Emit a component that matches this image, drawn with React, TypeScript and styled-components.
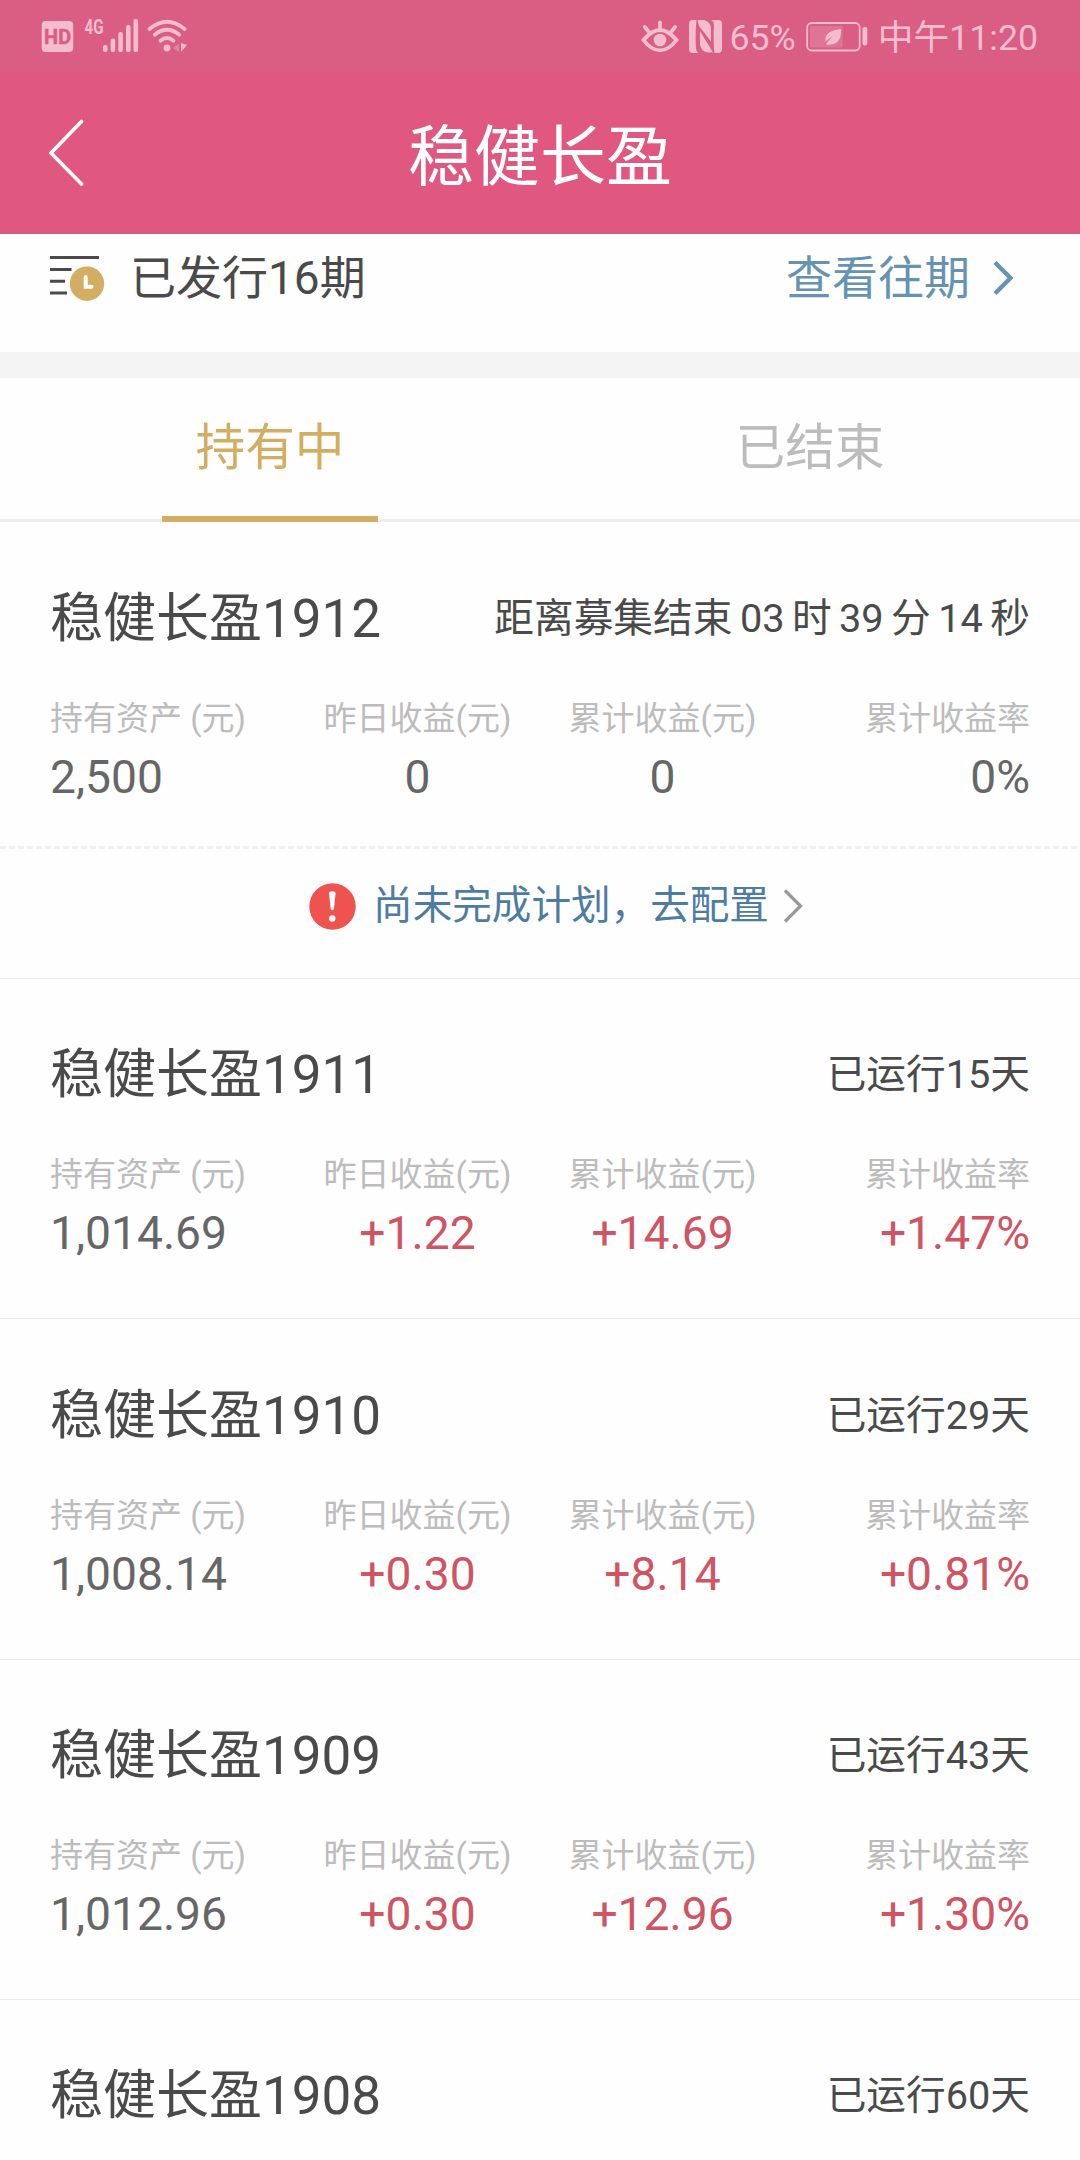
import React from "react";
import styled, { createGlobalStyle } from "styled-components";

const Global = createGlobalStyle`
  html, body { margin: 0; background: #fefefe; }
  body { font-family: Roboto, "Noto Sans CJK SC", sans-serif; color: #4a4a4a; }
  * { box-sizing: border-box; }
`;

const Screen = styled.div`
  width: 1080px;
  height: 2160px;
  overflow: hidden;
  background: #fefefe;
`;

const StatusBar = styled.header`
  display: flex;
  justify-content: space-between;
  align-items: center;
  height: 72px;
  padding: 2px 42px 0 41px;
  background: #da5d83;
  color: #f5bdd0;
  font-size: 35.7px;
  line-height: 44px;
`;

const StatusGroup = styled.div`
  display: flex;
  align-items: center;
  height: 44px;
`;

const StatusText = styled.span<{ $gap: number }>`
  margin: 2px 0 0 ${(p) => p.$gap}px;
  white-space: nowrap;
`;

const Icon = styled.svg<{ $gap?: number }>`
  display: block;
  flex: none;
  margin-left: ${(p) => p.$gap ?? 0}px;
`;

const TitleBar = styled.nav`
  display: grid;
  grid-template-columns: 120px 1fr 120px;
  align-items: center;
  height: 162px;
  background: #e0587f;
  border-bottom: 1px solid #c9607f;
`;

const BackButton = styled.button`
  display: flex;
  justify-content: flex-start;
  padding: 0 0 0 48px;
  border: 0;
  background: none;
`;

const Title = styled.h1`
  margin: 11px 0 0;
  color: #fff;
  font-size: 66px;
  font-weight: 400;
  line-height: 80px;
  text-align: center;
`;

const IssueRow = styled.section`
  display: flex;
  align-items: flex-start;
  height: 118px;
  padding: 14px 67px 0 50px;
  font-size: 46px;
  line-height: 60px;
`;

const IssueText = styled.span`
  flex: 1;
  margin-left: 24px;
`;

const HistoryLink = styled.a`
  display: flex;
  align-items: center;
  color: #6593b1;
`;

const Divider = styled.div`
  height: 26px;
  background: #f4f4f4;
`;

const Tabs = styled.div`
  display: grid;
  grid-template-columns: 1fr 1fr;
  height: 144px;
  box-shadow: inset 0 -3px #efefef;
`;

const Tab = styled.button<{ $active?: boolean }>`
  justify-self: center;
  width: 216px;
  padding: 1px 0 0;
  border: 0;
  border-bottom: 6px solid ${(p) => (p.$active ? "#d3ae62" : "transparent")};
  background: none;
  color: ${(p) => (p.$active ? "#d3ae62" : "#bcbcbc")};
  font: inherit;
  font-size: 49.7px;
  line-height: 60px;
`;

const Card = styled.article`
  border-bottom: 1px solid #ececec;
`;

const CardBody = styled.div<{ $short?: boolean }>`
  height: ${(p) => (p.$short ? 324 : 339.35)}px;
  padding: ${(p) => (p.$short ? 62 : 61.2)}px 50px 0;
`;

const CardHead = styled.div`
  display: flex;
  justify-content: space-between;
  line-height: 70px;
`;

const Name = styled.h2`
  margin: 0;
  font-size: 53px;
  font-weight: 400;
`;

const State = styled.span`
  font-size: 39.7px;
  word-spacing: -2.4px;
  white-space: nowrap;
`;

const Metrics = styled.dl`
  display: grid;
  grid-template-columns: repeat(4, 1fr);
  margin: 45px 0 0;
`;

const Metric = styled.div<{ $align: string }>`
  text-align: ${(p) => p.$align};
`;

const Label = styled.dt`
  color: #bdbcbc;
  font-size: 33px;
  line-height: 40px;
  white-space: nowrap;
`;

const Value = styled.dd<{ $gain: boolean }>`
  margin: 8px 0 0;
  color: ${(p) => (p.$gain ? "#cf5464" : "#666")};
  font-size: 46.2px;
  line-height: 60px;
`;

const Alert = styled.a`
  display: flex;
  justify-content: center;
  align-items: center;
  height: 132px;
  padding: 0 0 12px 32px;
  background: repeating-linear-gradient(90deg, #f1f1f1 0 6px, transparent 6px 9px) 0 0 / 100% 3px no-repeat;
  color: #4d7ca3;
  font-size: 39.6px;
  line-height: 50px;
`;

const AlertText = styled.span`
  margin: 0 14px 0 17px;
`;

interface Holding {
  name: string;
  state: string;
  values?: string[];
  pending?: boolean;
}

const labels = ["持有资产 (元)", "昨日收益(元)", "累计收益(元)", "累计收益率"];
const aligns = ["left", "center", "center", "right"];

const holdings: Holding[] = [
  { name: "稳健长盈1912", state: "距离募集结束 03 时 39 分 14 秒", values: ["2,500", "0", "0", "0%"], pending: true },
  { name: "稳健长盈1911", state: "已运行15天", values: ["1,014.69", "+1.22", "+14.69", "+1.47%"] },
  { name: "稳健长盈1910", state: "已运行29天", values: ["1,008.14", "+0.30", "+8.14", "+0.81%"] },
  { name: "稳健长盈1909", state: "已运行43天", values: ["1,012.96", "+0.30", "+12.96", "+1.30%"] },
  { name: "稳健长盈1908", state: "已运行60天" },
];

const SignalIcons = () => (
  <Icon width="148" height="44" viewBox="41 15 148 44" fill="#f3bdcf">
    <rect x="41.7" y="21" width="31.5" height="31" rx="4" />
    <text x="57.6" y="44" textAnchor="middle" fontSize="20.500" fontWeight="700" fill="#da5d83" stroke="#da5d83" strokeWidth=".5" textLength="27" lengthAdjust="spacingAndGlyphs">HD</text>
    <text x="84.5" y="34" fontSize="21" fontWeight="700" textLength="19" lengthAdjust="spacingAndGlyphs">4G</text>
    <rect x="103" y="45" width="4.6" height="7" rx="2" />
    <rect x="110.6" y="38.5" width="4.6" height="13.5" rx="2" />
    <rect x="118.3" y="32" width="4.6" height="20" rx="2" />
    <rect x="126" y="25" width="4.6" height="27" rx="2" />
    <rect x="133.5" y="19" width="4.6" height="33" rx="2" />
    <circle cx="167" cy="48" r="3.4" />
    <g fill="none" stroke="#f3bdcf" strokeWidth="3.8" strokeLinecap="round">
      <path d="M149.500 29Q167 14.500 184.500 29" />
      <path d="M154.700 34.800Q167 24.800 179.300 34.800" />
      <path d="M160.500 40.700Q167 35.300 173.500 40.700" />
    </g>
    <path d="M179 43.500v8.500l-6-4z" opacity=".4" />
    <path d="M181 43v9l6-7z" />
  </Icon>
);

const EyeIcon = () => (
  <Icon width="38" height="34" viewBox="642 20 38 34" fill="none" stroke="#f3bdcf" strokeWidth="3.8" strokeLinecap="round">
    <path d="M644.500 40C651 32.500 656 30 661 30S671 32.500 677.500 40C672 47.500 667 50.300 661 50.300S650 47.500 644.500 40Z" />
    <path d="M661 29v-6.500M650 32l-4.200-5M672 32l4.200-5" />
    <circle cx="661" cy="40" r="6.300" fill="#f3bdcf" stroke="none" />
  </Icon>
);

const NfcIcon = () => (
  <Icon $gap={10} width="34" height="34" viewBox="691 20 34 34" fill="#f3bdcf">
    <path d="M695 20h3.500c-1 9-1 22-.5 28 0 2 1 4 2.500 5H695a4 4 0 0 1-4-4V24a4 4 0 0 1 4-4Z" />
    <path d="M699.500 20h6.500c6 2 7 5 7 10v11.500L701 26ZM702 31l13 21.500h-5c-6-1-8-5-8-10Z" />
    <path d="M713 20h7a4 4 0 0 1 4 4v25a4 4 0 0 1-4 4h-3.500c-1-9-1-20-.5-27 0-3-1-5-3-6Z" />
  </Icon>
);

const BatteryIcon = () => (
  <Icon $gap={10} width="62" height="32" viewBox="805.500 21 62 32" fill="#f3bdcf">
    <rect x="806.700" y="23" width="52.500" height="27.500" rx="4.500" fill="none" stroke="#f3bdcf" strokeWidth="1.800" />
    <rect x="809.500" y="26" width="32.500" height="21.500" opacity=".25" />
    <path d="M840.500 29c.5 8-2 15.500-11 15.500l-2.500.5-1.500-1 7-8.500-7.500 6c-1-9 6-11 15.500-12.500Z" />
    <rect x="862" y="27" width="4.800" height="18.500" rx="2" />
  </Icon>
);

const BackIcon = () => (
  <Icon width="38" height="68" viewBox="48 118 38 68" fill="none" stroke="#fff" strokeWidth="3.600" strokeLinecap="round" strokeLinejoin="round">
    <path d="M81.500 120.500L51 152L81.500 183" />
  </Icon>
);

const IssueIcon = () => (
  <Icon width="56" height="60" viewBox="50 248 56 60">
    <path d="M50 257.500H99M50 269.500H71.500M50 281.300H65M50 293H67" fill="none" stroke="#4a4a4a" strokeWidth="3" />
    <circle cx="87" cy="283.700" r="17.200" fill="#d3ae62" />
    <path d="M85.700 277V286.700H91.500" fill="none" stroke="#fff" strokeWidth="4" strokeLinecap="round" />
  </Icon>
);

const Chevron = ({ color, width, gap }: { color: string; width: number; gap?: number }) => (
  <Icon $gap={gap} width="20" height="34" viewBox="0 0 20 34" fill="none" stroke={color} strokeWidth={width}>
    <path d="M2 1.500L17.500 17L2 32.500" />
  </Icon>
);

const WarningIcon = () => (
  <Icon width="47" height="47" viewBox="0 0 47 47">
    <circle cx="23.500" cy="23.500" r="23.200" fill="#ee5350" />
    <path d="M20 10Q20 8.300 23.300 8.300T26.600 10L24.900 26Q23.300 28.500 21.700 26Z" fill="#fff" />
    <circle cx="23.300" cy="35.500" r="3.200" fill="#fff" />
  </Icon>
);

const HoldingCard = ({ item }: { item: Holding }) => (
  <Card>
    <CardBody $short={item.pending}>
      <CardHead>
        <Name>{item.name}</Name>
        <State>{item.state}</State>
      </CardHead>
      {item.values && (
        <Metrics>
          {item.values.map((value, i) => (
            <Metric key={labels[i]} $align={aligns[i]}>
              <Label>{labels[i]}</Label>
              <Value $gain={value.startsWith("+")}>{value}</Value>
            </Metric>
          ))}
        </Metrics>
      )}
    </CardBody>
    {item.pending && (
      <Alert>
        <WarningIcon />
        <AlertText>尚未完成计划，去配置</AlertText>
        <Chevron color="#999" width={3.2} />
      </Alert>
    )}
  </Card>
);

export default function App() {
  return (
    <Screen>
      <Global />
      <StatusBar>
        <StatusGroup>
          <SignalIcons />
        </StatusGroup>
        <StatusGroup>
          <EyeIcon />
          <NfcIcon />
          <StatusText $gap={6}>65%</StatusText>
          <BatteryIcon />
          <StatusText $gap={10}>中午11:20</StatusText>
        </StatusGroup>
      </StatusBar>
      <TitleBar>
        <BackButton aria-label="返回">
          <BackIcon />
        </BackButton>
        <Title>稳健长盈</Title>
      </TitleBar>
      <IssueRow>
        <IssueIcon />
        <IssueText>已发行16期</IssueText>
        <HistoryLink>
          查看往期
          <Chevron color="#6593b1" width={4.4} gap={23} />
        </HistoryLink>
      </IssueRow>
      <Divider />
      <Tabs>
        <Tab $active>持有中</Tab>
        <Tab>已结束</Tab>
      </Tabs>
      {holdings.map((item) => (
        <HoldingCard key={item.name} item={item} />
      ))}
    </Screen>
  );
}
